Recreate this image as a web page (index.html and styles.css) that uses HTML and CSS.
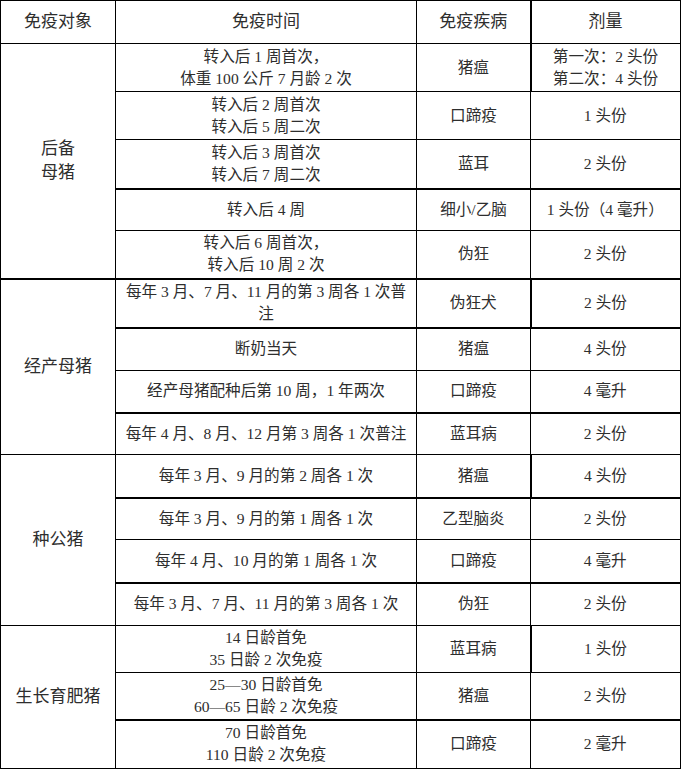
FILE: index.html
```html
<!DOCTYPE html>
<html lang="zh">
<head>
<meta charset="utf-8">
<title>免疫程序</title>
<link rel="stylesheet" href="styles.css">
</head>
<body>
<table class="sched">
  <colgroup>
    <col class="c1"><col class="c2"><col class="c3"><col class="c4">
  </colgroup>
  <tr class="h43">
    <th>免疫对象</th><th>免疫时间</th><th>免疫疾病</th><th>剂量</th>
  </tr>
  <tr class="h48">
    <td class="grp tb" rowspan="5">后备<br>母猪</td>
    <td>转入后 1 周首次，<br>体重 100 公斤 7 月龄 2 次</td>
    <td>猪瘟</td>
    <td>第一次：2 头份<br>第二次：4 头份</td>
  </tr>
  <tr class="h48">
    <td>转入后 2 周首次<br>转入后 5 周二次</td><td>口蹄疫</td><td>1 头份</td>
  </tr>
  <tr class="h49">
    <td class="tb">转入后 3 周首次<br>转入后 7 周二次</td><td class="tb">蓝耳</td><td class="tb">2 头份</td>
  </tr>
  <tr class="h42">
    <td>转入后 4 周</td><td>细小/乙脑</td><td>1 头份（4 毫升）</td>
  </tr>
  <tr class="h48">
    <td class="tb">转入后 6 周首次，<br>转入后 10 周 2 次</td><td class="tb">伪狂</td><td class="tb">2 头份</td>
  </tr>
  <tr class="h49">
    <td class="grp" rowspan="4">经产母猪</td>
    <td class="tb">每年 3 月、7 月、11 月的第 3 周各 1 次普<br>注</td><td class="tb">伪狂犬</td><td class="tb">2 头份</td>
  </tr>
  <tr class="h43">
    <td>断奶当天</td><td>猪瘟</td><td>4 头份</td>
  </tr>
  <tr class="h42">
    <td class="tb">经产母猪配种后第 10 周，1 年两次</td><td class="tb">口蹄疫</td><td class="tb">4 毫升</td>
  </tr>
  <tr class="h42">
    <td>每年 4 月、8 月、12 月第 3 周各 1 次普注</td><td>蓝耳病</td><td>2 头份</td>
  </tr>
  <tr class="h43">
    <td class="grp" rowspan="4">种公猪</td>
    <td class="tb">每年 3 月、9 月的第 2 周各 1 次</td><td class="tb">猪瘟</td><td class="tb">4 头份</td>
  </tr>
  <tr class="h42">
    <td>每年 3 月、9 月的第 1 周各 1 次</td><td>乙型脑炎</td><td>2 头份</td>
  </tr>
  <tr class="h43">
    <td class="tb">每年 4 月、10 月的第 1 周各 1 次</td><td class="tb">口蹄疫</td><td class="tb">4 毫升</td>
  </tr>
  <tr class="h43">
    <td>每年 3 月、7 月、11 月的第 3 周各 1 次</td><td>伪狂</td><td>2 头份</td>
  </tr>
  <tr class="h47">
    <td class="grp" rowspan="3">生长育肥猪</td>
    <td>14 日龄首免<br>35 日龄 2 次免疫</td><td>蓝耳病</td><td>1 头份</td>
  </tr>
  <tr class="h47">
    <td class="tb">25—30 日龄首免<br>60—65 日龄 2 次免疫</td><td class="tb">猪瘟</td><td class="tb">2 头份</td>
  </tr>
  <tr class="h49">
    <td>70 日龄首免<br>110 日龄 2 次免疫</td><td>口蹄疫</td><td>2 毫升</td>
  </tr>
</table>
</body>
</html>
```

FILE: styles.css
```css
html, body {
  margin: 0;
  padding: 0;
  background: #ffffff;
}

.sched {
  border-collapse: collapse;
  table-layout: fixed;
  width: 680px;
  font-family: "Liberation Serif", "Noto Sans CJK SC", serif;
  color: #2e2e2e;
  font-size: 15.6px;
  line-height: 22px;
}

.c1 { width: 115px; }
.c2 { width: 301px; }
.c3 { width: 114px; }
.c4 { width: 150px; }

.sched th,
.sched td {
  border: 1px solid #000;
  padding: 0;
  text-align: center;
  vertical-align: middle;
  font-weight: normal;
}

.sched th {
  font-size: 17px;
}

.sched td:nth-child(4),
.sched th:nth-child(4) {
  border-left-width: 2px;
}

.sched tr > :last-child {
  border-right-width: 2px;
}

.sched td.grp {
  font-size: 17px;
  border-right-width: 1px;
  line-height: 24px;
}

.sched td.tb {
  border-bottom-width: 2px;
}

.h42 { height: 42px; }
.h43 { height: 43px; }
.h47 { height: 47px; }
.h48 { height: 48px; }
.h49 { height: 49px; }
```
